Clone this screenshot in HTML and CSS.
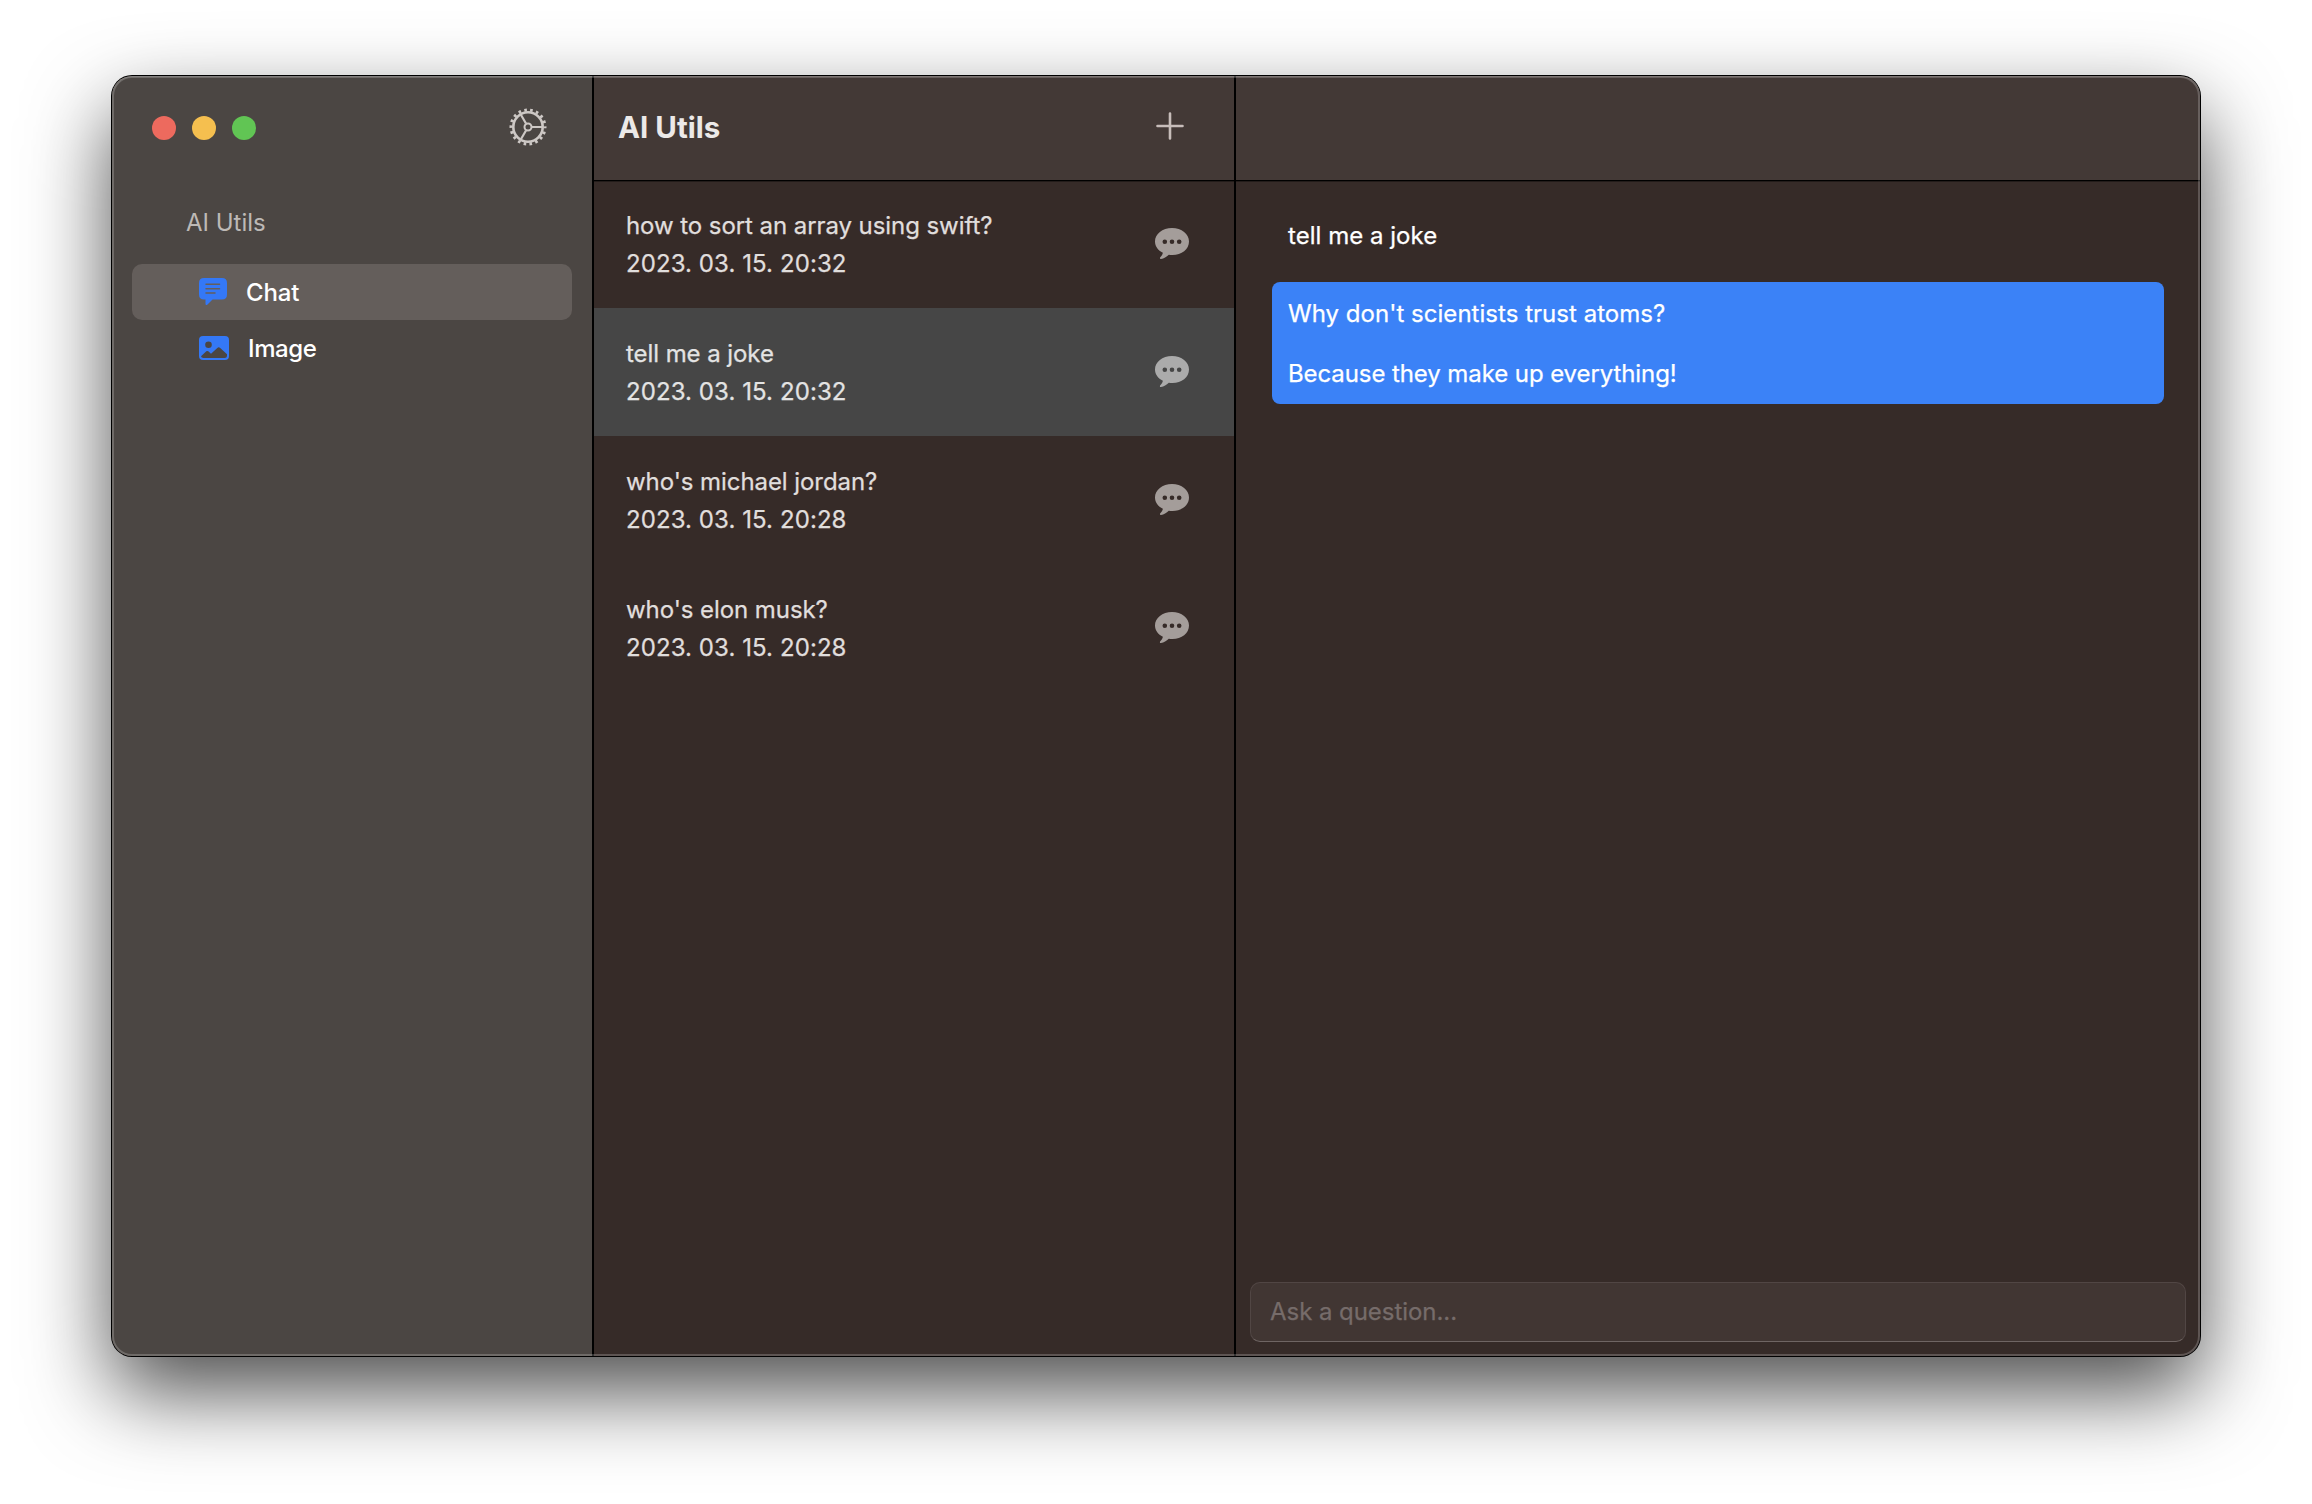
FILE: index.html
```
<!DOCTYPE html>
<html lang="en">
<head>
<meta charset="utf-8">
<title>AI Utils</title>
<link rel="stylesheet" href="styles.css">
</head>
<body>
<svg class="sprite" aria-hidden="true">
  <symbol id="bubble" viewBox="0 0 34 32">
    <path fill-rule="evenodd" d="M17 0C26.600 0 34 5.900 34 13.600C34 21.400 26.600 27 17.500 27C16.200 27 15 26.900 13.800 26.700C11.500 28.900 8.800 30.600 6 31C4.900 31.100 4.500 30 5.300 29.200C6.500 28 7.600 26.500 7.900 24.800C3 22.500 0 18.400 0 13.600C0 5.900 7.400 0 17 0ZM9.800 11.500a2.300 2.300 0 1 0 0 4.600a2.300 2.300 0 1 0 0-4.600ZM17 11.500a2.300 2.300 0 1 0 0 4.600a2.300 2.300 0 1 0 0-4.600ZM24.200 11.500a2.300 2.300 0 1 0 0 4.600a2.300 2.300 0 1 0 0-4.600Z"/>
  </symbol>
</svg>
<main class="window">
  <aside class="sidebar">
    <div class="titlebar">
      <div class="lights"><i class="light red"></i><i class="light yellow"></i><i class="light green"></i></div>
      <svg class="gear" viewBox="-19 -19 38 38">
        <circle r="14.700" fill="none" stroke="currentColor" stroke-width="2.600"/>
        <circle r="17" fill="none" stroke="currentColor" stroke-width="3" stroke-dasharray="2.600 3.334" stroke-dashoffset="1.300"/>
        <circle r="3.500" fill="none" stroke="currentColor" stroke-width="2"/>
        <path d="M4 0H14.500M-2 -3.460L-7.250 -12.560M-2 3.460L-7.250 12.560" stroke="currentColor" stroke-width="2.200"/>
      </svg>
    </div>
    <h2 class="section">AI Utils</h2>
    <nav class="nav">
      <a class="nav-item selected">
        <svg class="nav-icon" viewBox="0 0 30 28">
          <path fill="#3478f6" d="M5 0H23Q28 0 28 5V16.500Q28 21.500 23 21.500H13.500L8.500 26.500Q6.500 28 6.500 25.500V21.500H5Q0 21.500 0 16.500V5Q0 0 5 0Z"/>
          <path stroke="#645e5b" stroke-width="1.500" stroke-linecap="round" d="M7 6.300H20.500M7 10.700H20.500M7 15H16"/>
        </svg>
        <span class="chat">Chat</span>
      </a>
      <a class="nav-item">
        <svg class="nav-icon" viewBox="0 0 30 28">
          <rect y="2" width="30" height="24" rx="4" fill="#3478f6"/>
          <circle cx="9.500" cy="10.700" r="3.300" fill="#4b4643"/>
          <path fill="#4b4643" d="M2 22.200L7.300 17.300Q8.300 16.500 9.300 17.300L12 19.700L18.300 13.900Q19.700 12.800 21.200 13.900L28 20.200V21.500Q28 24 25.500 24H4.500Q2.300 24 2 22.200Z"/>
        </svg>
        <span class="image">Image</span>
      </a>
    </nav>
  </aside>
  <section class="list">
    <header class="bar">
      <h1 class="title">AI Utils</h1>
      <svg class="plus" viewBox="0 0 28 28"><path d="M14 1.500V26.500M1.500 14H26.500" stroke="currentColor" stroke-width="2.600" stroke-linecap="round"/></svg>
    </header>
    <article class="row">
      <div class="row-text"><p>how to sort an array using swift?</p><p class="date">2023. 03. 15. 20:32</p></div>
      <svg class="bubble"><use href="#bubble"/></svg>
    </article>
    <article class="row active">
      <div class="row-text"><p>tell me a joke</p><p class="date">2023. 03. 15. 20:32</p></div>
      <svg class="bubble"><use href="#bubble"/></svg>
    </article>
    <article class="row">
      <div class="row-text"><p>who's michael jordan?</p><p class="date">2023. 03. 15. 20:28</p></div>
      <svg class="bubble"><use href="#bubble"/></svg>
    </article>
    <article class="row">
      <div class="row-text"><p>who's elon musk?</p><p class="date">2023. 03. 15. 20:28</p></div>
      <svg class="bubble"><use href="#bubble"/></svg>
    </article>
  </section>
  <section class="detail">
    <header class="bar"></header>
    <div class="messages">
      <div class="message">tell me a joke</div>
      <div class="message reply">Why don't scientists trust atoms?<br><br><span class="tight">Because they make up everything!</span></div>
    </div>
    <div class="ask">Ask a question...</div>
  </section>
</main>
</body>
</html>
```
FILE: styles.css
```
* { box-sizing: border-box; margin: 0; padding: 0; }

body {
  width: 2312px;
  height: 1504px;
  padding: 76px 112px 0;
  overflow: hidden;
  background: #fff;
  font: 400 24px/30px Inter, "Liberation Sans", sans-serif;
  color: #fff;
}

.sprite { position: absolute; width: 0; height: 0; }

.window {
  position: relative;
  display: grid;
  grid-template-columns: 480px 644px 1fr;
  width: 2088px;
  height: 1280px;
  border-radius: 20px;
  background: #362b28;
  box-shadow: 0 0 0 1px #000, 0 36px 84px rgba(0, 0, 0, .7);
}

/* light rim over the panes */
.window::after {
  content: "";
  position: absolute;
  inset: 0;
  border-radius: 20px;
  box-shadow: inset 0 0 0 2px rgba(255, 255, 255, .2), inset 0 1px 0 rgba(255, 255, 255, .15);
  pointer-events: none;
}

.sidebar { background: #4b4643; border-radius: 20px 0 0 20px; }

.titlebar {
  display: flex;
  justify-content: space-between;
  align-items: center;
  height: 101px;
  padding: 0 45.500px 0 40px;
}

.lights { display: flex; gap: 16px; padding-top: 3px; }
.light { width: 24px; height: 24px; border-radius: 50%; }
.red { background: #ed6a5e; }
.yellow { background: #f5bf4f; }
.green { background: #61c554; }
.gear { width: 38px; height: 38px; color: #cdc8c5; }

.section {
  padding: 31px 0 0 74px;
  font-size: 24px;
  font-weight: 400;
  color: #bdb9b6;
}

.nav { display: flex; flex-direction: column; padding: 26px 20px 0; }

.nav-item {
  display: flex;
  align-items: center;
  height: 56px;
  padding-left: 67px;
  border-radius: 10px;
  font-weight: 550;
  letter-spacing: -.15px;
}

.selected { background: #645e5b; }
.nav-icon { width: 30px; height: 28px; }
.chat { margin-left: 17px; padding-top: 2px; }
.image { margin-left: 19px; padding-top: 2px; letter-spacing: -.4px; }

.list { border: solid #000; border-width: 0 2px; }
.detail { display: flex; flex-direction: column; }

.bar {
  display: flex;
  justify-content: space-between;
  align-items: center;
  height: 105px;
  padding: 0 50.500px 4px 24px;
  border-bottom: 1px solid #000;
  background: #433936;
  box-shadow: 0 1px 0 rgba(0, 0, 0, .35);
}

.detail .bar { border-top-right-radius: 20px; }

.title {
  padding-top: 2px;
  font-size: 29.500px;
  line-height: 36px;
  font-weight: 650;
  color: #ece9e8;
}

.plus { width: 28px; height: 28px; color: #c7bdba; }

.row {
  display: flex;
  justify-content: space-between;
  align-items: center;
  height: 128px;
  padding: 0 45px 0 32px;
  letter-spacing: -.07px;
  -webkit-text-stroke: .25px currentColor;
  color: #e0dedd;
}

.row:first-of-type { margin-top: -1px; }
.row-text { display: flex; flex-direction: column; gap: 8px; padding-top: 2px; }
.date { letter-spacing: .08px; }
.active { background: #464646; color: #e3e3e3; }
.bubble { width: 34px; height: 32px; fill: #a49d9a; }
.active .bubble { fill: #ababab; }

.bubble, .bubble use { -webkit-text-stroke: 0; }

.messages {
  flex: 1;
  display: flex;
  flex-direction: column;
  gap: 16px;
  padding: 23px 36px 0;
}

.message {
  padding: 17px 16px 15px;
  border-radius: 8px;
  -webkit-text-stroke: .25px currentColor;
  letter-spacing: .03px;
}

.reply { background: #3b82f7; }
.tight { letter-spacing: -.09px; }

.ask {
  height: 60px;
  margin: 0 14px 14px;
  padding: 14px 19px;
  border: 1px solid #514644;
  border-bottom-color: #6f6563;
  border-radius: 10px;
  background: #413633;
  -webkit-text-stroke: .25px currentColor;
  letter-spacing: -.05px;
  color: #766c6a;
}
```
